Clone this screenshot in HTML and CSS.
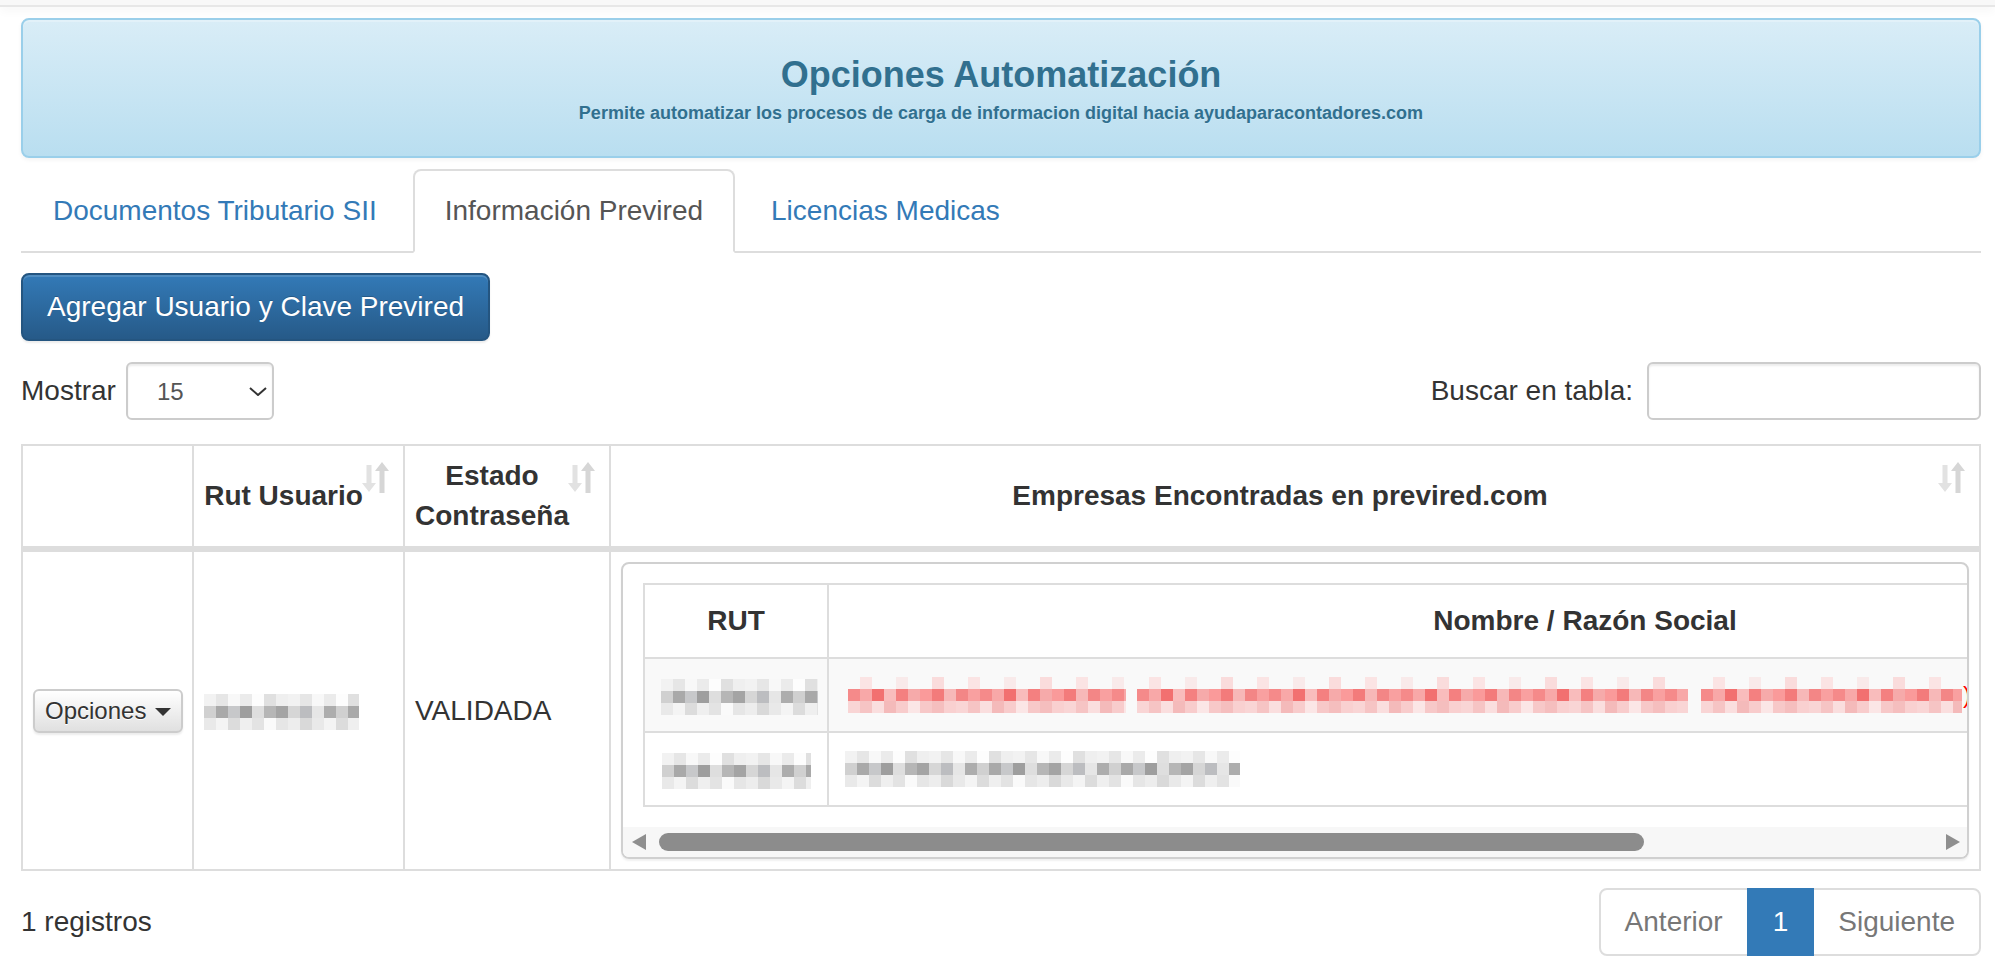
FILE: index.html
```html
<!DOCTYPE html>
<html lang="es">
<head>
  <meta charset="UTF-8" />
  <meta name="viewport" content="width=device-width, initial-scale=1.0" />
  <title>Opciones Automatización</title>
  <link rel="stylesheet" href="styles.css">
</head>
<body>
  <div class="topbar"></div>
  <div class="page">
    <div class="banner">
      <h3 class="banner-title">Opciones Automatización</h3>
      <p class="banner-sub">Permite automatizar los procesos de carga de informacion digital hacia ayudaparacontadores.com</p>
    </div>

    <ul class="tabs">
      <li><a href="#">Documentos Tributario SII</a></li>
      <li class="active"><a href="#">Información Previred</a></li>
      <li><a href="#">Licencias Medicas</a></li>
    </ul>

    <div class="tab-pane">
      <button class="btn btn-primary">Agregar Usuario y Clave Previred</button>

      <div class="dt-top">
        <label class="dt-length">
          <span>Mostrar</span>
          <span class="select-wrap">
            <select><option>15</option><option>25</option><option>50</option></select>
            <svg class="chevron" width="18" height="9" viewBox="0 0 18 9"><path d="M1 1l8 7 8-7" fill="none" stroke="#333" stroke-width="2"/></svg>
          </span>
        </label>
        <label class="dt-filter">
          <span>Buscar en tabla:</span>
          <input type="search" />
        </label>
      </div>

      <table class="users">
        <thead>
          <tr>
            <th class="col-opt"></th>
            <th class="col-rut sorting">Rut Usuario
              <svg class="sort-icon" width="27" height="31" viewBox="0 0 27 31"><path fill="#e2e2e2" d="M4.5 3h5v18H14l-7 9-7-9h4.5z"/><path fill="#d6d6d6" d="M20 0l7 9h-4.5v22h-5V9H13z"/></svg>
            </th>
            <th class="col-estado sorting">Estado Contraseña
              <svg class="sort-icon" width="27" height="31" viewBox="0 0 27 31"><path fill="#e2e2e2" d="M4.5 3h5v18H14l-7 9-7-9h4.5z"/><path fill="#d6d6d6" d="M20 0l7 9h-4.5v22h-5V9H13z"/></svg>
            </th>
            <th class="col-emp sorting">Empresas Encontradas en previred.com
              <svg class="sort-icon" width="27" height="31" viewBox="0 0 27 31"><path fill="#e2e2e2" d="M4.5 3h5v18H14l-7 9-7-9h4.5z"/><path fill="#d6d6d6" d="M20 0l7 9h-4.5v22h-5V9H13z"/></svg>
            </th>
          </tr>
        </thead>
        <tbody>
          <tr>
            <td><button class="btn btn-default btn-xs">Opciones <span class="caret"></span></button></td>
            <td><span class="blur blur-gray rut-user"></span></td>
            <td>VALIDADA</td>
            <td class="emp-cell">
              <div class="scroll-box">
                <div class="scroll-inner">
                  <table class="empresas">
                    <thead>
                      <tr><th class="emp-rut">RUT</th><th>Nombre / Razón Social</th></tr>
                    </thead>
                    <tbody>
                      <tr class="odd">
                        <td class="emp-rut"><span class="blur blur-gray rut-a"></span></td>
                        <td>
                          <div class="blur-line danger">
                            <span class="blur blur-red red-a"></span>
                            <span class="blur blur-red red-b"></span>
                            <span class="blur blur-red red-c"></span>
                            <span class="paren">)</span>
                          </div>
                        </td>
                      </tr>
                      <tr>
                        <td class="emp-rut"><span class="blur blur-gray rut-b"></span></td>
                        <td>
                          <div class="blur-line">
                            <span class="blur blur-gray name-b"></span>
                          </div>
                        </td>
                      </tr>
                    </tbody>
                  </table>
                </div>
                <div class="hscroll">
                  <span class="arrow-left"></span>
                  <span class="thumb"></span>
                  <span class="arrow-right"></span>
                </div>
              </div>
            </td>
          </tr>
        </tbody>
      </table>

      <div class="dt-bottom">
        <div class="dt-info">1 registros</div>
        <ul class="pagination">
          <li class="disabled"><a href="#">Anterior</a></li>
          <li class="active"><a href="#">1</a></li>
          <li class="disabled"><a href="#">Siguiente</a></li>
        </ul>
      </div>
    </div>
  </div>
</body>
</html>
```

FILE: styles.css
```css
* {
  box-sizing: border-box;
  margin: 0;
  padding: 0;
}
body {
  font-family: 'Liberation Sans', Arial, sans-serif;
  font-size: 28px;
  line-height: 40px;
  color: #333;
  background: #fff;
}
a {
  text-decoration: none;
}
.topbar {
  height: 7px;
  background: #f8f8f8;
  border-bottom: 2px solid #e7e7e7;
  box-shadow: 0 4px 10px rgba(0,0,0,0.04);
}
.page {
  padding: 0 14px 0 21px;
}

/* cabecera */
.banner {
  margin-top: 11px;
  height: 140px;
  padding-top: 33px;
  text-align: center;
  color: #31708f;
  background: linear-gradient(to bottom, #d9edf7 0, #b9def0 100%);
  border: 2px solid #9acfea;
  border-radius: 8px;
  box-shadow: inset 0 2px 0 rgba(255,255,255,0.25), 0 2px 4px rgba(0,0,0,0.05);
  text-shadow: 0 1px 0 rgba(255,255,255,0.2);
}
.banner-title {
  font-size: 36px;
  line-height: 44px;
  font-weight: bold;
}
.banner-sub {
  margin-top: 5px;
  font-size: 18px;
  line-height: 22px;
  font-weight: bold;
}

/* tabs */
.tabs {
  list-style: none;
  display: flex;
  margin-top: 11px;
  border-bottom: 2px solid #ddd;
}
.tabs li {
  margin-bottom: -2px;
  margin-right: 4px;
}
.tabs a {
  display: block;
  padding: 20px 30px;
  line-height: 40px;
  color: #337ab7;
  border: 2px solid transparent;
  border-radius: 8px 8px 0 0;
}
.tabs li.active a {
  color: #555;
  background: #fff;
  border-color: #ddd;
  border-bottom-color: transparent;
}
.tab-pane {
  padding-top: 20px;
}

/* botones */
.btn {
  display: inline-block;
  font-family: inherit;
  font-size: 28px;
  line-height: 40px;
  padding: 12px 24px;
  border: 2px solid transparent;
  border-radius: 8px;
  white-space: nowrap;
  cursor: pointer;
}
.btn-primary {
  color: #fff;
  background: linear-gradient(to bottom, #337ab7 0, #265a88 100%);
  border-color: #245580;
  text-shadow: 0 -1px 0 rgba(0,0,0,0.2);
  box-shadow: inset 0 2px 0 rgba(255,255,255,0.15), 0 2px 2px rgba(0,0,0,0.075);
}
.btn-default {
  color: #333;
  background: linear-gradient(to bottom, #fff 0, #e0e0e0 100%);
  border-color: #ccc;
  text-shadow: 0 1px 0 #fff;
  box-shadow: inset 0 2px 0 rgba(255,255,255,0.15), 0 2px 2px rgba(0,0,0,0.075);
}
.btn-xs {
  font-size: 24px;
  line-height: 36px;
  padding: 2px 10px;
  border-radius: 6px;
  vertical-align: middle;
}
.caret {
  display: inline-block;
  width: 0;
  height: 0;
  margin-left: 2px;
  vertical-align: middle;
  border-top: 8px solid #333;
  border-left: 8px solid transparent;
  border-right: 8px solid transparent;
}

/* controles tabla */
.dt-top {
  display: flex;
  justify-content: space-between;
  align-items: center;
  margin-top: 21px;
}
.dt-length, .dt-filter {
  display: flex;
  align-items: center;
  font-weight: normal;
}
.dt-length {
  gap: 10px;
}
.dt-filter {
  gap: 14px;
}
.select-wrap {
  position: relative;
  display: block;
}
.select-wrap select {
  display: block;
  appearance: none;
  -webkit-appearance: none;
  width: 148px;
  height: 58px;
  padding: 0 0 0 29px;
  font-family: inherit;
  font-size: 24px;
  color: #555;
  background: #fff;
  border: 2px solid #ccc;
  border-radius: 6px;
  box-shadow: inset 0 2px 2px rgba(0,0,0,0.075);
}
.chevron {
  position: absolute;
  right: 7px;
  top: 25px;
  pointer-events: none;
}
.dt-filter input {
  width: 334px;
  height: 58px;
  border: 2px solid #ccc;
  border-radius: 6px;
  box-shadow: inset 0 2px 2px rgba(0,0,0,0.075);
}

/* tabla principal */
.users {
  width: 100%;
  margin-top: 24px;
  border-collapse: collapse;
  table-layout: fixed;
}
.users th, .users td {
  border: 2px solid #ddd;
  padding: 10px;
  line-height: 40px;
  vertical-align: middle;
}
.users > thead > tr > th {
  position: relative;
  text-align: center;
  font-weight: bold;
  border-bottom-width: 6px;
}
.users th.sorting {
  padding-right: 40px;
}
.col-opt { width: 171px; }
.col-rut { width: 211px; white-space: nowrap; }
.col-estado { width: 206px; }
.col-emp { white-space: nowrap; }
.sort-icon {
  position: absolute;
  top: 16px;
  right: 14px;
}

/* pixelado: tres filas de bloques de 12px */
.blur {
  display: inline-block;
  height: 36px;
  vertical-align: middle;
}
.blur-gray {
  background:
    repeating-linear-gradient(90deg, #f2f2f2 0 12px, #e6e6e6 12px 24px, #f8f8f8 24px 36px, #ebebeb 36px 48px, #fdfdfd 48px 60px, #e0e0e0 60px 72px, #efefef 72px 84px) 0 0 / 100% 12px no-repeat,
    repeating-linear-gradient(90deg, #d0d0d0 0 12px, #a9a9a9 12px 24px, #c7c8ca 24px 36px, #9e9e9e 36px 48px, #dedede 48px 60px, #b6b6b6 60px 72px, #a4a4a4 72px 84px, #d6d6d6 84px 96px, #bcbdc0 96px 108px, #e6e6e6 108px 120px, #adadad 120px 132px) 0 12px / 100% 12px no-repeat,
    repeating-linear-gradient(90deg, #e9e9e9 0 12px, #f4f4f4 12px 24px, #dcdcdc 24px 36px, #efefef 36px 48px, #e3e3e3 48px 60px, #fafafa 60px 72px, #e6e6e6 72px 84px, #ededed 84px 96px, #d9d9d9 96px 108px) 0 24px / 100% 12px no-repeat;
}
.blur-red {
  background:
    repeating-linear-gradient(90deg, #f9f9f9 0 12px, #fbe4e4 12px 24px, #f9f9f9 24px 48px, #f9eaea 48px 60px, #f9f9f9 60px 84px, #fadcdc 84px 96px, #f9f9f9 96px 108px) 0 0 / 100% 12px no-repeat,
    repeating-linear-gradient(90deg, #f58a8a 0 12px, #f8a8a8 12px 24px, #f27070 24px 36px, #f9bcbc 36px 48px, #f48080 48px 60px, #f6aaaa 60px 72px, #fa9a9a 72px 84px, #f37b7b 84px 96px, #f7b8b8 96px 108px, #f38686 108px 120px, #f9a0a0 120px 132px) 0 12px / 100% 12px no-repeat,
    repeating-linear-gradient(90deg, #f9d5d5 0 12px, #f6c4c4 12px 24px, #fadede 24px 36px, #f4baba 36px 48px, #f8cccc 48px 60px, #fbe6e6 60px 72px, #f7c8c8 72px 84px, #f5bebe 84px 96px, #f9d0d0 96px 108px) 0 24px / 100% 12px no-repeat;
}
.rut-user { width: 155px; }
.rut-a { width: 157px; }
.rut-b { width: 149px; }
.red-a { width: 278px; margin-left: 3px; }
.red-b { width: 551px; margin-left: 11px; }
.red-c { width: 261px; margin-left: 13px; }
.name-b { width: 395px; }

/* empresas */
.scroll-box {
  border: 2px solid #d0d0d0;
  border-radius: 8px;
  overflow: hidden;
  box-shadow: 0 2px 2px rgba(0,0,0,0.06);
}
.scroll-inner {
  overflow: hidden;
  padding: 19px 0 20px 20px;
}
.empresas {
  width: 1700px;
  border-collapse: collapse;
  table-layout: fixed;
}
.empresas th, .empresas td {
  border: 2px solid #ddd;
  padding: 16px;
  line-height: 40px;
  vertical-align: middle;
}
.empresas th {
  font-weight: bold;
  text-align: center;
}
.empresas .emp-rut {
  width: 184px;
  text-align: center;
}
.empresas tr.odd td {
  background: #f9f9f9;
}
.blur-line {
  display: flex;
  align-items: center;
  white-space: nowrap;
  height: 40px;
}
.paren {
  color: #f00;
  font-size: 24px;
  margin-left: 1px;
}
.hscroll {
  display: flex;
  align-items: center;
  height: 30px;
  padding: 0 7px 0 9px;
  background: #f7f7f7;
}
.arrow-left, .arrow-right {
  width: 0;
  height: 0;
  border-top: 8px solid transparent;
  border-bottom: 8px solid transparent;
}
.arrow-left {
  border-right: 14px solid #8f8f8f;
}
.arrow-right {
  margin-left: auto;
  border-left: 14px solid #8f8f8f;
}
.thumb {
  width: 985px;
  height: 18px;
  margin-left: 13px;
  border-radius: 9px;
  background: #8c8c8c;
}

/* pie */
.dt-bottom {
  display: flex;
  justify-content: space-between;
  align-items: center;
  margin-top: 17px;
}
.pagination {
  list-style: none;
  display: flex;
}
.pagination a {
  display: block;
  padding: 12px 24px;
  line-height: 40px;
  color: #777;
  background: #fff;
  border: 2px solid #ddd;
  margin-left: -2px;
}
.pagination li:first-child a {
  margin-left: 0;
  border-radius: 8px 0 0 8px;
}
.pagination li:last-child a {
  border-radius: 0 8px 8px 0;
}
.pagination li.active a {
  position: relative;
  color: #fff;
  background: #337ab7;
  border-color: #337ab7;
}
```
